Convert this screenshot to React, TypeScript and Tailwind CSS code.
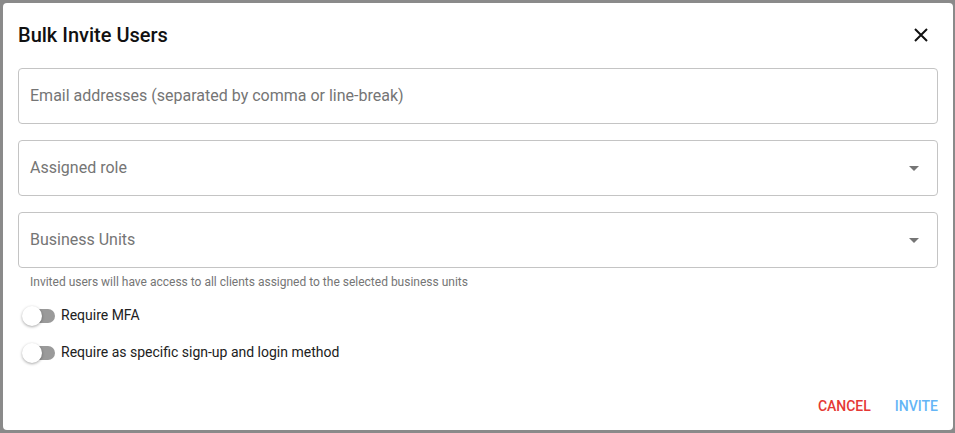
import React, { useState } from "react";

const Field = ({ label, select }: { label: string; select?: boolean }) => (
  <div className="flex h-[56px] items-center justify-between rounded-[4px] border border-[#c4c4c4] pl-[11px] pr-[18px]">
    <span className="text-[16px] text-[#757575]">{label}</span>
    {select && (
      <svg width="10" height="5" viewBox="0 0 10 5">
        <path d="M0 0 L10 0 L5 5 Z" fill="#757575" />
      </svg>
    )}
  </div>
);

const Toggle = ({ label }: { label: string }) => {
  const [on, setOn] = useState(false);
  return (
    <div className="flex h-[37px] items-center">
      <button
        onClick={() => setOn(!on)}
        className="relative ml-[5px] mr-[6px] h-[14px] w-[32px] rounded-full bg-[#9a9a9a]"
      >
        <span className="absolute left-[-1px] top-[-3px] h-[20px] w-[20px] rounded-full bg-white shadow-[0_1px_3px_rgba(0,0,0,0.35)]" />
      </button>
      <span className="text-[14px] text-[#212121]">{label}</span>
    </div>
  );
};

export default function App() {
  return (
    <div
      className="h-[433px] w-[955px] bg-[#8a8a8a] pb-[3px] pl-[3px] pr-[2px] pt-[3px]"
      style={{ fontFamily: "Roboto, 'Liberation Sans', sans-serif" }}
    >
      <div className="flex h-full flex-col rounded-[4px] bg-white px-[15px]">
        <div className="flex h-[62px] items-center justify-between pt-[1px]">
          <h1 className="text-[20px] font-medium text-[#111]">Bulk Invite Users</h1>
          <svg width="14" height="14" viewBox="0 0 14 14" className="mr-[10px]">
            <path d="M1 1 L13 13 M13 1 L1 13" stroke="#111" strokeWidth="2" />
          </svg>
        </div>
        <div className="mt-[3px] flex flex-col gap-4">
          <Field label="Email addresses (separated by comma or line-break)" />
          <Field label="Assigned role" select />
          <Field label="Business Units" select />
        </div>
        <p className="mt-[6px] pl-[12px] text-[12px] leading-4 text-[#757575]">
          Invited users will have access to all clients assigned to the selected business units
        </p>
        <div className="mt-[7px] flex flex-col">
          <Toggle label="Require MFA" />
          <Toggle label="Require as specific sign-up and login method" />
        </div>
        <div className="mt-auto mb-[13px] flex justify-end gap-[24px] pr-0">
          <button className="text-[14px] font-medium text-[#e53935]">CANCEL</button>
          <button className="text-[14px] font-medium text-[#64b5f6]">INVITE</button>
        </div>
      </div>
    </div>
  );
}
